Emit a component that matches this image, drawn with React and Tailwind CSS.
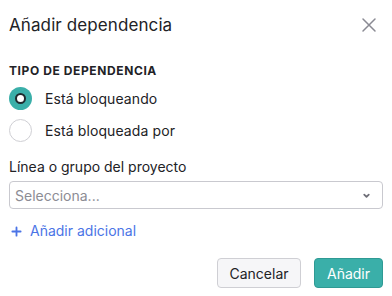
import React, { useState } from "react";

function Radio({ checked, label, onClick }) {
  return (
    <button type="button" onClick={onClick} className="flex items-center h-[32px] text-left">
      {checked ? (
        <span className="w-[23px] h-[23px] rounded-full bg-[#3aafa9] flex items-center justify-center">
          <span className="w-[11px] h-[11px] rounded-full bg-white border-[2px] border-[#1f2a2e]" />
        </span>
      ) : (
        <span className="w-[23px] h-[23px] rounded-full border border-[#cfcfd4] bg-white" />
      )}
      <span className="ml-[13px] text-[14px] tracking-[0.1px] text-[#222226]">{label}</span>
    </button>
  );
}

export default function App() {
  const [tipo, setTipo] = useState("bloqueando");

  return (
    <div className="w-[392px] h-[296px] bg-white px-[9px] font-['Inter',sans-serif] text-[#222226]">
      {/* cabecera */}
      <div className="flex items-center justify-between h-[46px] pt-[3px]">
        <h1 className="text-[17px] leading-[20px] tracking-[0.1px]">Añadir dependencia</h1>
        <svg width="16" height="16" viewBox="0 0 16 16" className="mr-[6px]">
          <path d="M2 2L14 14M14 2L2 14" stroke="#8a8a93" strokeWidth="1.5" strokeLinecap="round" />
        </svg>
      </div>

      <div className="mt-[17px] text-[12px] leading-[16px] font-bold tracking-[0.6px] uppercase">
        Tipo de dependencia
      </div>

      <div className="mt-[3px] flex flex-col">
        <Radio checked={tipo === "bloqueando"} label="Está bloqueando" onClick={() => setTipo("bloqueando")} />
        <Radio checked={tipo === "bloqueada"} label="Está bloqueada por" onClick={() => setTipo("bloqueada")} />
      </div>

      <div className="mt-[11px] text-[14px] leading-[20px]">Línea o grupo del proyecto</div>

      <div className="mt-[4px] h-[28px] rounded-[4px] border border-[#c9c9cf] flex items-center justify-between pl-[5px] pr-[11px]">
        <span className="text-[14px] text-[#8c8c94]">Selecciona...</span>
        <svg width="9" height="9" viewBox="0 0 10 10">
          <path d="M2.5 4L5 6.5L7.5 4" stroke="#6f6f78" strokeWidth="2" fill="none" strokeLinecap="round" strokeLinejoin="round" />
        </svg>
      </div>

      <div className="mt-[12px] flex items-center text-[14px] leading-[20px] text-[#4b74e6]">
        <svg width="11" height="11" viewBox="0 0 12 12" className="ml-[2px]">
          <path d="M6 1.5V10.5M1.5 6H10.5" stroke="#4b74e6" strokeWidth="2" strokeLinecap="round" />
        </svg>
        <span className="ml-[8px]">Añadir adicional</span>
      </div>

      <div className="mt-[17px] flex justify-end gap-[13px]">
        <button type="button" className="h-[30px] w-[84px] rounded-[4px] border border-[#cfcfd4] bg-[#f6f6f8] text-[14px] text-[#222226]">
          Cancelar
        </button>
        <button type="button" className="h-[30px] w-[69px] rounded-[4px] bg-[#3aafa9] border border-[#2f9a94] text-[14px] text-white">
          Añadir
        </button>
      </div>
    </div>
  );
}
